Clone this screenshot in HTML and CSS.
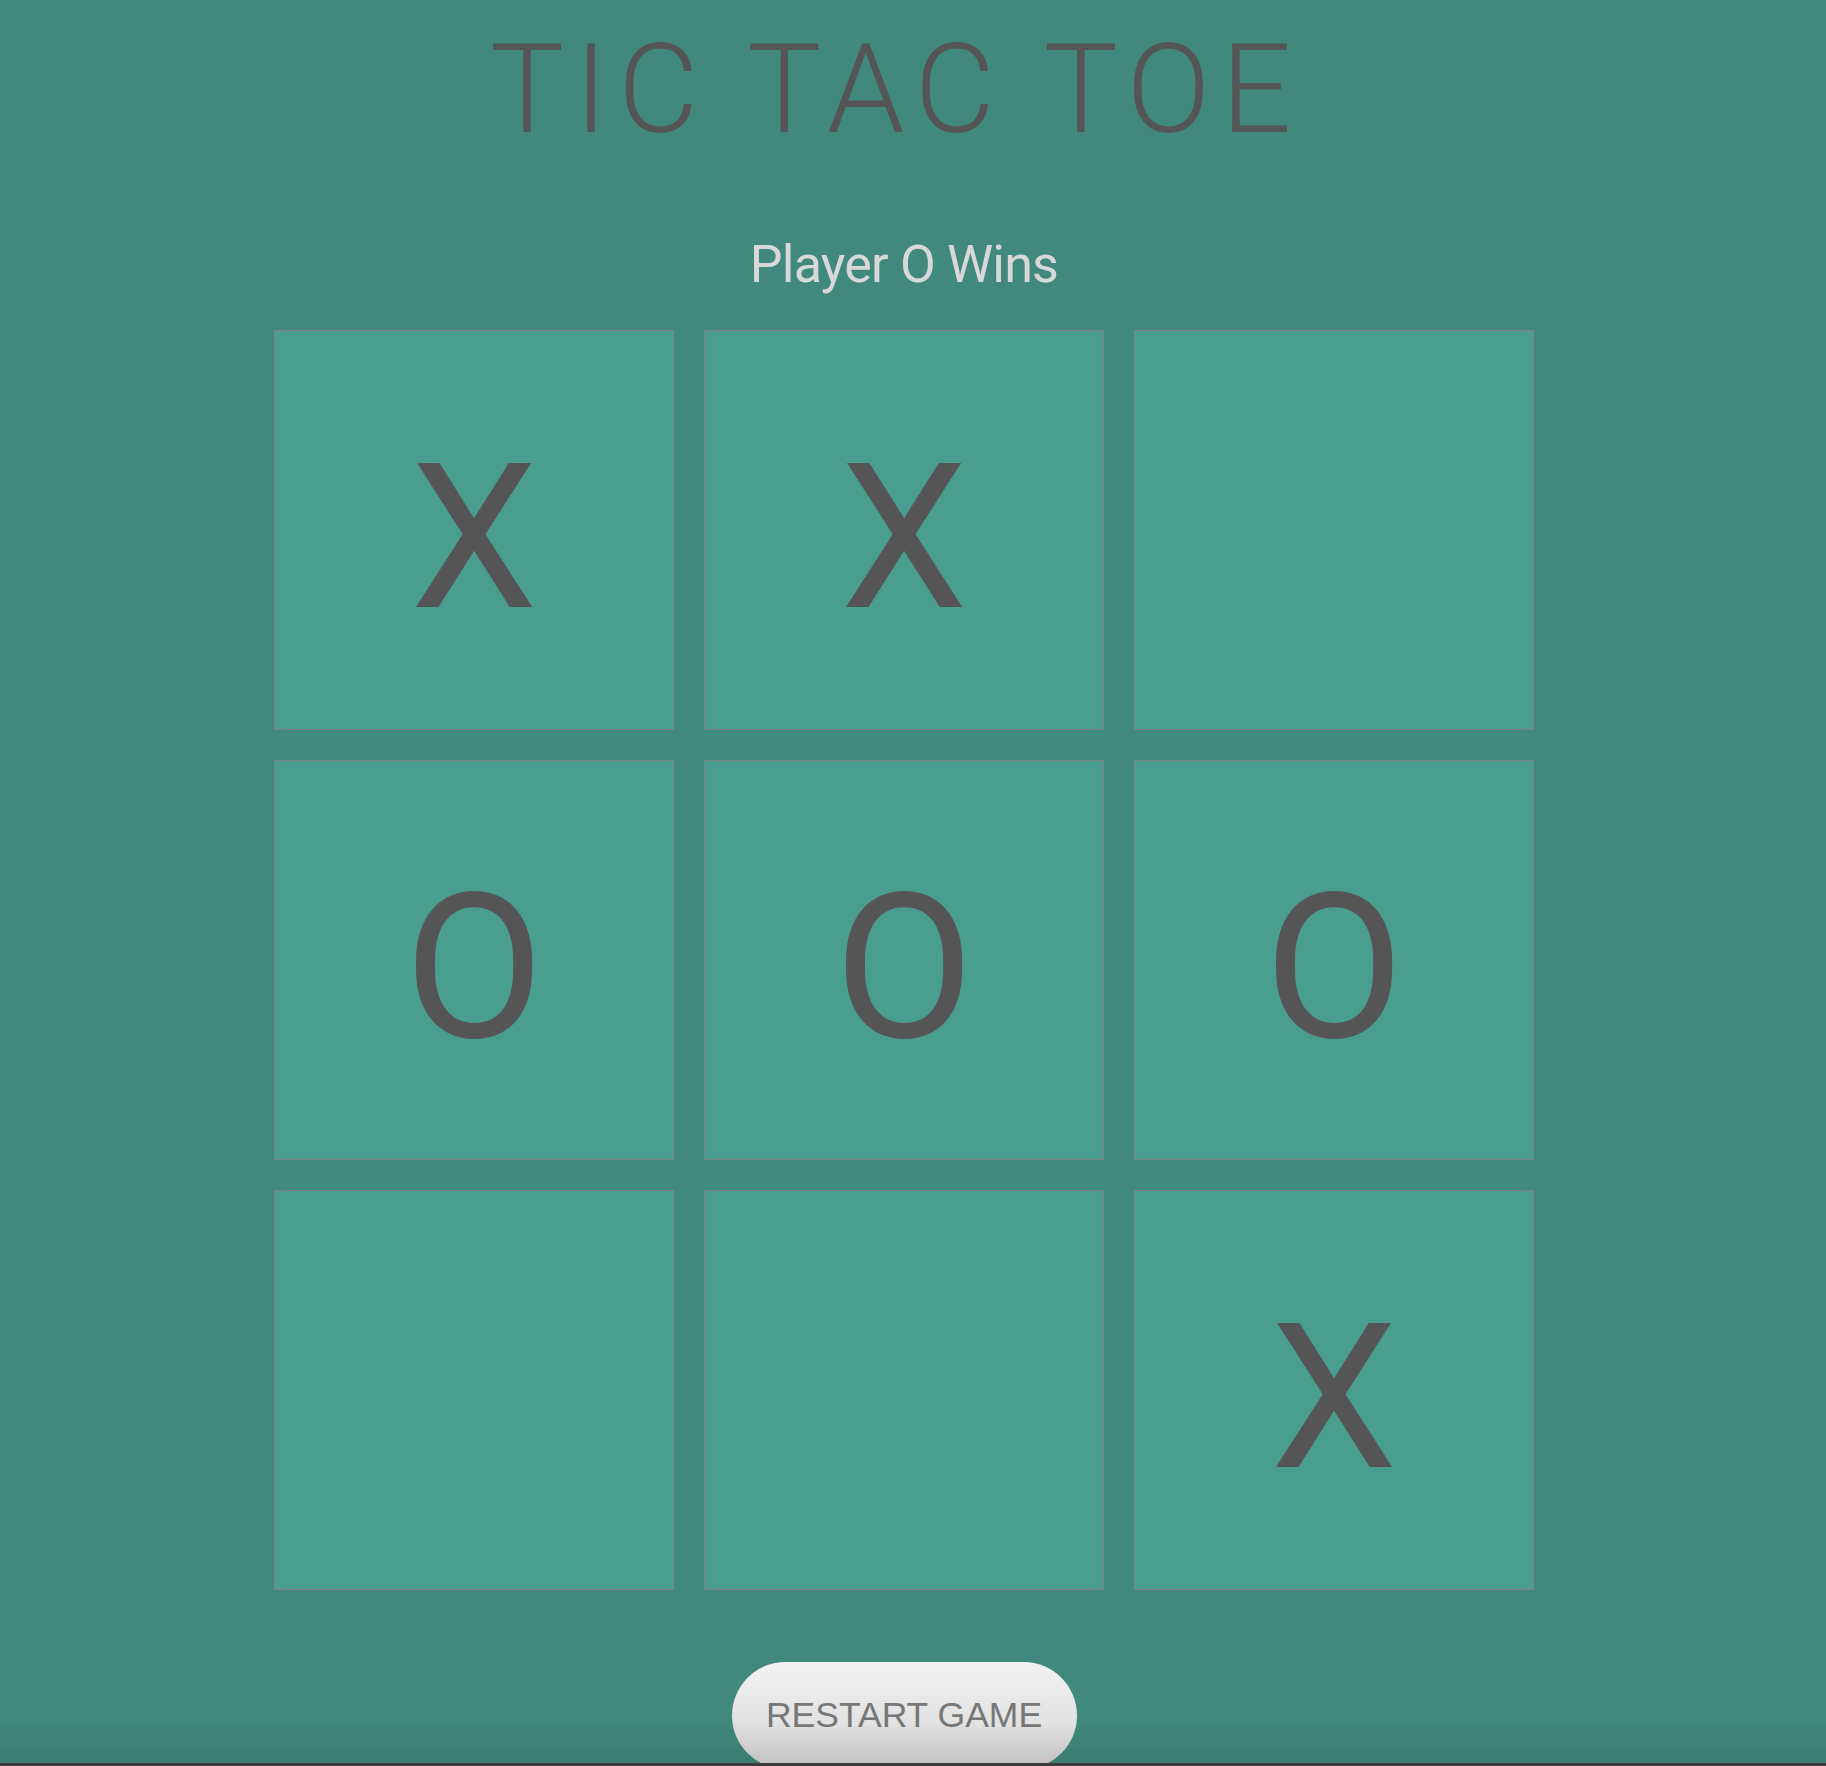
FILE: index.html
```html
<!DOCTYPE html>
<html lang="en">
<head>
<meta charset="utf-8">
<title>Tic Tac Toe</title>
<link rel="stylesheet" href="styles.css">
</head>
<body>
<div class="page">
  <h1 class="title">TIC TAC TOE</h1>
  <p class="status">Player O Wins</p>
  <div class="board-wrap">
    <div class="board">
      <div class="cell">X</div>
      <div class="cell">X</div>
      <div class="cell"></div>
      <div class="cell">O</div>
      <div class="cell">O</div>
      <div class="cell">O</div>
      <div class="cell"></div>
      <div class="cell"></div>
      <div class="cell">X</div>
    </div>
  </div>
  <div class="actions">
    <button class="restart">RESTART GAME</button>
  </div>
</div>
<div class="bottom-shade"></div>
</body>
</html>
```
FILE: styles.css
```css
html, body {
  margin: 0;
  padding: 0;
  background: #40897c;
}
.page {
  width: 1808px;
  height: 1763px;
  overflow: hidden;
  display: flex;
  flex-direction: column;
  align-items: center;
  font-family: Roboto, "Open Sans", sans-serif;
}
.title {
  margin: 28px 0 0 0;
  padding-right: 16px;
  font-size: 124px;
  line-height: 124px;
  font-weight: 300;
  letter-spacing: 10.5px;
  color: #555555;
}
.status {
  margin: 87px 0 0 0;
  font-size: 52px;
  line-height: 52px;
  letter-spacing: -0.8px;
  color: #d8d8d8;
}
.board-wrap {
  width: 1260px;
  margin-top: 39px;
}
.board {
  display: grid;
  grid-template-columns: repeat(3, 400px);
  grid-auto-rows: 400px;
  gap: 30px;
}
.cell {
  box-sizing: border-box;
  background: #4a9e90;
  border: 1px solid #808080;
  display: flex;
  align-items: center;
  justify-content: center;
  padding-top: 16px;
  font-size: 203px;
  line-height: 1;
  color: #555555;
}
.actions {
  margin-top: 72px;
}
.restart {
  width: 345px;
  height: 107px;
  border: none;
  border-radius: 54px;
  background: linear-gradient(#f2f2f2, #d6d6d6);
  color: #777777;
  font-family: "Liberation Sans", Arial, sans-serif;
  font-size: 35.5px;
  padding: 0;
}
.bottom-shade {
  position: fixed;
  left: 0;
  right: 0;
  bottom: 0;
  height: 43px;
  background: linear-gradient(rgba(0,0,0,0) 0, rgba(0,0,0,0.09) 40px, #3a3a3a 40px, #3a3a3a 43px);
  pointer-events: none;
}
```
